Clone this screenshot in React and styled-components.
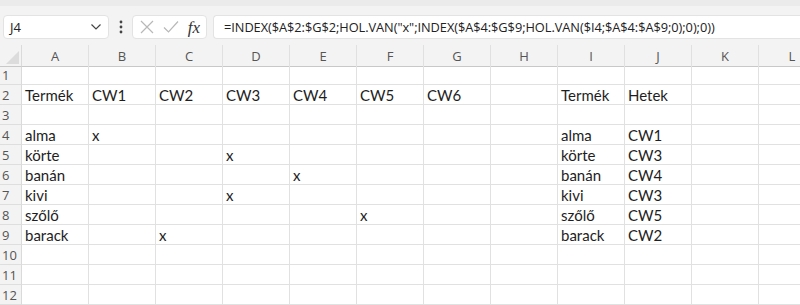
import React from "react";
import styled, { createGlobalStyle } from "styled-components";

const GlobalStyle = createGlobalStyle`
  body {
    margin: 0;
    background: #ffffff;
    overflow: hidden;
  }
`;

const Page = styled.div`
  width: 800px;
  height: 305px;
  overflow: hidden;
  font-family: "Open Sans", "Liberation Sans", sans-serif;
`;

const Toolbar = styled.div`
  height: 45px;
  box-sizing: border-box;
  background: #f3f3f3;
  border-top: 6px solid #ebebeb;
  display: flex;
  align-items: center;
  padding: 3px 0 0 3px;
`;

const Box = styled.div`
  height: 24px;
  box-sizing: border-box;
  background: #ffffff;
  border: 1px solid #e3e3e3;
  border-radius: 4px;
  display: flex;
  align-items: center;
`;

const NameBox = styled(Box)`
  width: 106px;
  padding: 0 6px 0 6px;
  justify-content: space-between;
  font-size: 13px;
  color: #222;
`;

const Dots = styled.div`
  width: 23px;
  display: flex;
  justify-content: center;
`;

const FxBox = styled(Box)`
  width: 75px;
  padding: 0 6px 0 7px;
  justify-content: space-between;
  margin-right: 6px;
`;

const FormulaBox = styled(Box)`
  flex: 1;
  border-right: none;
  border-radius: 4px 0 0 4px;
  padding-left: 10px;
  font-size: 12.8px;
  letter-spacing: -0.05px;
  color: #222;
  white-space: nowrap;
  overflow: hidden;
`;

const Fx = styled.span`
  font-family: "Liberation Serif", "DejaVu Serif", serif;
  font-style: italic;
  font-size: 17px;
  color: #333;
  line-height: 1;
`;

const Grid = styled.div`
  display: grid;
  grid-template-columns: 22px repeat(12, 67px);
  grid-auto-rows: 20px;
  font-family: "Lato", "Liberation Sans", sans-serif;
`;

const Corner = styled.div`
  height: 22px;
  background: #f3f3f3;
  border-bottom: 1px solid #c8c8c8;
  border-right: 1px solid #dadada;
  box-sizing: border-box;
  position: relative;
  overflow: hidden;
  &::after {
    content: "";
    position: absolute;
    right: 2px;
    bottom: 2px;
    border-left: 13px solid transparent;
    border-bottom: 13px solid #dcdcdc;
  }
`;

const ColHead = styled.div`
  height: 22px;
  box-sizing: border-box;
  background: #f3f3f3;
  border-bottom: 1px solid #c8c8c8;
  border-right: 1px solid #e0e0e0;
  display: flex;
  align-items: center;
  justify-content: center;
  padding-top: 1px;
  font-family: "Open Sans", "Liberation Sans", sans-serif;
  font-size: 13px;
  color: #555;
`;

const RowHead = styled.div`
  box-sizing: border-box;
  background: #f3f3f3;
  border-bottom: 1px solid #dedede;
  border-right: 1px solid #dadada;
  display: flex;
  align-items: center;
  padding: 1px 0 0 2px;
  font-family: "Open Sans", "Liberation Sans", sans-serif;
  font-size: 13px;
  color: #555;
`;

const Cell = styled.div`
  box-sizing: border-box;
  border-bottom: 1px solid #e1e1e1;
  border-right: 1px solid #e1e1e1;
  display: flex;
  align-items: center;
  padding: 1px 0 0 3px;
  font-size: 15px;
  color: #1e1e1e;
  white-space: nowrap;
`;

const cols = ["A", "B", "C", "D", "E", "F", "G", "H", "I", "J", "K", "L"];

const data = {
  2: { A: "Termék", B: "CW1", C: "CW2", D: "CW3", E: "CW4", F: "CW5", G: "CW6", I: "Termék", J: "Hetek" },
  4: { A: "alma", B: "x", I: "alma", J: "CW1" },
  5: { A: "körte", D: "x", I: "körte", J: "CW3" },
  6: { A: "banán", E: "x", I: "banán", J: "CW4" },
  7: { A: "kivi", D: "x", I: "kivi", J: "CW3" },
  8: { A: "szőlő", F: "x", I: "szőlő", J: "CW5" },
  9: { A: "barack", C: "x", I: "barack", J: "CW2" },
};

const formula =
  '=INDEX($A$2:$G$2;HOL.VAN("x";INDEX($A$4:$G$9;HOL.VAN($I4;$A$4:$A$9;0);0);0))';

const Chevron = () => (
  <svg width="12" height="8" viewBox="0 0 12 8">
    <path d="M1.5 1.5 L6 6 L10.5 1.5" fill="none" stroke="#444" strokeWidth="1.2" />
  </svg>
);

const VDots = () => (
  <svg width="4" height="14" viewBox="0 0 4 14">
    <circle cx="2" cy="2" r="1.4" fill="#444" />
    <circle cx="2" cy="7" r="1.4" fill="#444" />
    <circle cx="2" cy="12" r="1.4" fill="#444" />
  </svg>
);

const Cross = () => (
  <svg width="14" height="14" viewBox="0 0 14 14">
    <path d="M1 1 L13 13 M13 1 L1 13" stroke="#b8b8b8" strokeWidth="1.2" fill="none" />
  </svg>
);

const Check = () => (
  <svg width="16" height="14" viewBox="0 0 16 14">
    <path d="M1 7.5 L5.5 12 L15 1.5" stroke="#b8b8b8" strokeWidth="1.2" fill="none" />
  </svg>
);

const App = () => {
  const rows = Array.from({ length: 12 }, (_, i) => i + 1);
  return (
    <Page>
      <GlobalStyle />
      <Toolbar>
        <NameBox>
          <span>J4</span>
          <Chevron />
        </NameBox>
        <Dots>
          <VDots />
        </Dots>
        <FxBox>
          <Cross />
          <Check />
          <Fx>fx</Fx>
        </FxBox>
        <FormulaBox>{formula}</FormulaBox>
      </Toolbar>
      <Grid>
        <Corner />
        {cols.map((c) => (
          <ColHead key={c}>{c}</ColHead>
        ))}
        {rows.map((r) => (
          <React.Fragment key={r}>
            <RowHead>{r}</RowHead>
            {cols.map((c) => (
              <Cell key={c}>{(data[r] && data[r][c]) || ""}</Cell>
            ))}
          </React.Fragment>
        ))}
      </Grid>
    </Page>
  );
};

export default App;
